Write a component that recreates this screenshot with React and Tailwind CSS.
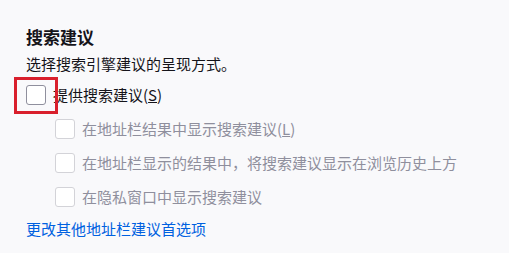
import React from "react";

const subOptions = [
  { label: "在地址栏结果中显示搜索建议", key: "L" },
  { label: "在地址栏显示的结果中，将搜索建议显示在浏览历史上方" },
  { label: "在隐私窗口中显示搜索建议" },
];

function Box({ dim }) {
  return (
    <span
      className={
        "block w-5 h-5 shrink-0 rounded-[3px] border bg-white " +
        (dim ? "border-[#d3d3d8]" : "border-[#8f8f9d]")
      }
    />
  );
}

export default function App() {
  return (
    <div
      className="w-[509px] h-[253px] bg-[#f9f9fb] pl-[26px] pt-[24px] text-[15px] text-[#15141a]"
      style={{ fontFamily: '"Noto Sans CJK SC", "Noto Sans", sans-serif' }}
    >
      <h1 className="text-[17px] font-bold leading-[26px]">搜索建议</h1>
      <p className="mt-[3px] leading-[22px]">选择搜索引擎建议的呈现方式。</p>

      {/* main option, with the red highlight over it */}
      <div className="relative mt-[3px] flex h-[34px] items-center gap-[7px]">
        <Box />
        <span className="leading-[22px]">
          提供搜索建议(<span className="underline">S</span>)
        </span>
        <span className="pointer-events-none absolute left-[-12px] top-[-1px] w-[44px] h-[37px] border-[3px] border-[#d91f2c]" />
      </div>

      <div className="pl-[29px]">
        {subOptions.map((o) => (
          <div key={o.label} className="flex h-[34px] items-center gap-[7px] text-[#8f8f9d]">
            <Box dim />
            <span className="leading-[22px]">
              {o.label}
              {o.key && (
                <>
                  (<span className="underline">{o.key}</span>)
                </>
              )}
            </span>
          </div>
        ))}
      </div>

      <a className="mt-[4px] block leading-[22px] text-[#0061e0]" href="#">
        更改其他地址栏建议首选项
      </a>
    </div>
  );
}
